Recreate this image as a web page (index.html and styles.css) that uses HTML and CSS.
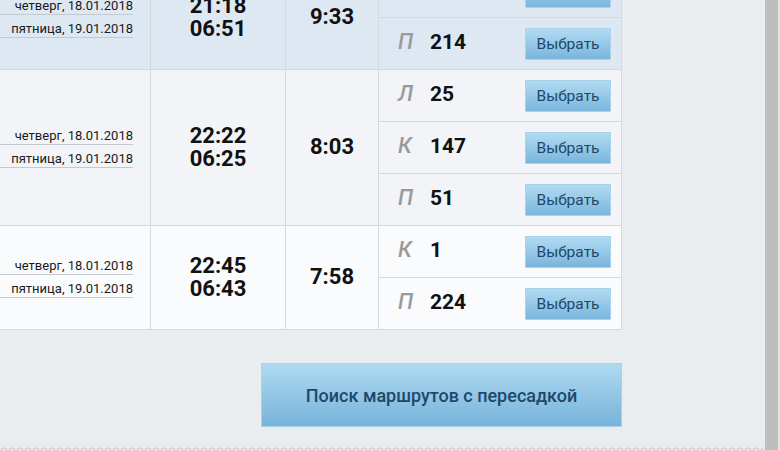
FILE: index.html
```html
<!DOCTYPE html>
<html lang="ru">
<head>
<meta charset="utf-8">
<link rel="stylesheet" href="styles.css">
</head>
<body>
<div class="screen">
  <div class="main">
    <div class="table">
      <div class="trip trip-blue">
        <div class="cell dates">
          <div class="date-list">
            <div class="date">четверг, 18.01.2018</div>
            <div class="date">пятница, 19.01.2018</div>
          </div>
        </div>
        <div class="cell times"><div>21:18</div><div>06:51</div></div>
        <div class="cell dur">9:33</div>
        <div class="cell trains">
          <div class="train"><span class="kind">К</span><span class="num">9</span><button class="pick">Выбрать</button></div>
          <div class="train"><span class="kind">П</span><span class="num">214</span><button class="pick">Выбрать</button></div>
        </div>
      </div>
      <div class="trip trip-gray">
        <div class="cell dates">
          <div class="date-list">
            <div class="date">четверг, 18.01.2018</div>
            <div class="date">пятница, 19.01.2018</div>
          </div>
        </div>
        <div class="cell times"><div>22:22</div><div>06:25</div></div>
        <div class="cell dur">8:03</div>
        <div class="cell trains">
          <div class="train"><span class="kind">Л</span><span class="num">25</span><button class="pick">Выбрать</button></div>
          <div class="train"><span class="kind">К</span><span class="num">147</span><button class="pick">Выбрать</button></div>
          <div class="train"><span class="kind">П</span><span class="num">51</span><button class="pick">Выбрать</button></div>
        </div>
      </div>
      <div class="trip trip-white">
        <div class="cell dates">
          <div class="date-list">
            <div class="date">четверг, 18.01.2018</div>
            <div class="date">пятница, 19.01.2018</div>
          </div>
        </div>
        <div class="cell times"><div>22:45</div><div>06:43</div></div>
        <div class="cell dur">7:58</div>
        <div class="cell trains">
          <div class="train"><span class="kind">К</span><span class="num">1</span><button class="pick">Выбрать</button></div>
          <div class="train"><span class="kind">П</span><span class="num">224</span><button class="pick">Выбрать</button></div>
        </div>
      </div>
    </div>
    <div class="actions">
      <button class="transfer">Поиск маршрутов с пересадкой</button>
    </div>
    <div class="wave"></div>
  </div>
  <div class="scroll"></div>
  <div class="scroll-edge"></div>
</div>
</body>
</html>
```

FILE: styles.css
```css
* { box-sizing: border-box; }
html, body { margin: 0; padding: 0; }
body {
  font-family: Roboto, "Liberation Sans", sans-serif;
  color: #111;
  background: #e9edf0;
  overflow: hidden;
}
.screen {
  display: flex;
  width: 780px;
  height: 450px;
  overflow: hidden;
}
.main {
  width: 765px;
  height: 450px;
  background: #e9edf0;
  display: flex;
  flex-direction: column;
}
.scroll { width: 13px; background: #bebebe; }
.scroll-edge { width: 2px; background: #e2e2e2; }

.table {
  width: 622px;
  margin-top: -34px;
  border-right: 1px solid #d5dadf;
}
.trip {
  display: grid;
  grid-template-columns: 150px 135px 93px 1fr;
  border-bottom: 1px solid #d5dadf;
}
.trip-blue { background: #dee8f3; }
.trip-gray { background: #f2f4f7; }
.trip-white { background: #fafbfc; }

.cell + .cell { border-left: 1px solid #d5dadf; }

.dates {
  display: flex;
  align-items: center;
  padding: 0 17px 6px 0;
}
.date-list { width: 100%; }
.date {
  font-size: 13px;
  line-height: 14px;
  padding: 7px 0 1px;
  text-align: right;
  border-bottom: 1px solid #c3c9cf;
  color: #1a1a1a;
}
.times {
  display: flex;
  flex-direction: column;
  justify-content: center;
  align-items: center;
  font-size: 22px;
  font-weight: 700;
  line-height: 23px;
  padding-bottom: 1px;
}
.dur {
  display: flex;
  align-items: center;
  justify-content: center;
  font-size: 22px;
  font-weight: 700;
  padding-bottom: 2px;
}
.trains { display: flex; flex-direction: column; }
.train {
  height: 51px;
  display: flex;
  align-items: center;
  padding: 0 10px 0 19px;
}
.train + .train { height: 52px; border-top: 1px solid #d5dadf; }
.kind, .num { position: relative; top: -2px; }
.kind {
  width: 32px;
  font-size: 22px;
  font-style: italic;
  font-weight: 500;
  color: #9a9a9a;
}
.num {
  font-size: 21px;
  font-weight: 700;
  flex: 1;
}
.pick {
  width: 86px;
  height: 32px;
  border: 1px solid #a9d3ec;
  border-radius: 0;
  background: linear-gradient(#b1dbf2, #7ab5dc);
  color: #1f4868;
  font-family: Roboto, "Liberation Sans", sans-serif;
  font-size: 15.5px;
  padding: 0;
}
.actions {
  width: 622px;
  display: flex;
  justify-content: flex-end;
  padding-top: 33px;
}
.transfer {
  width: 361px;
  height: 64px;
  border: 1px solid #a9d3ec;
  border-radius: 0;
  background: linear-gradient(#afdaf2, #77b3da);
  color: #1f4868;
  font-family: Roboto, "Liberation Sans", sans-serif;
  font-size: 18px;
  font-weight: 500;
  padding: 0;
}
.wave {
  margin-top: 20px;
  width: 764px;
  height: 4px;
  background: radial-gradient(circle at 4px 4px, transparent 2.3px, #c9c9c9 2.8px, #c9c9c9 3.3px, transparent 3.8px) repeat-x;
  background-size: 8px 4px;
}
```
